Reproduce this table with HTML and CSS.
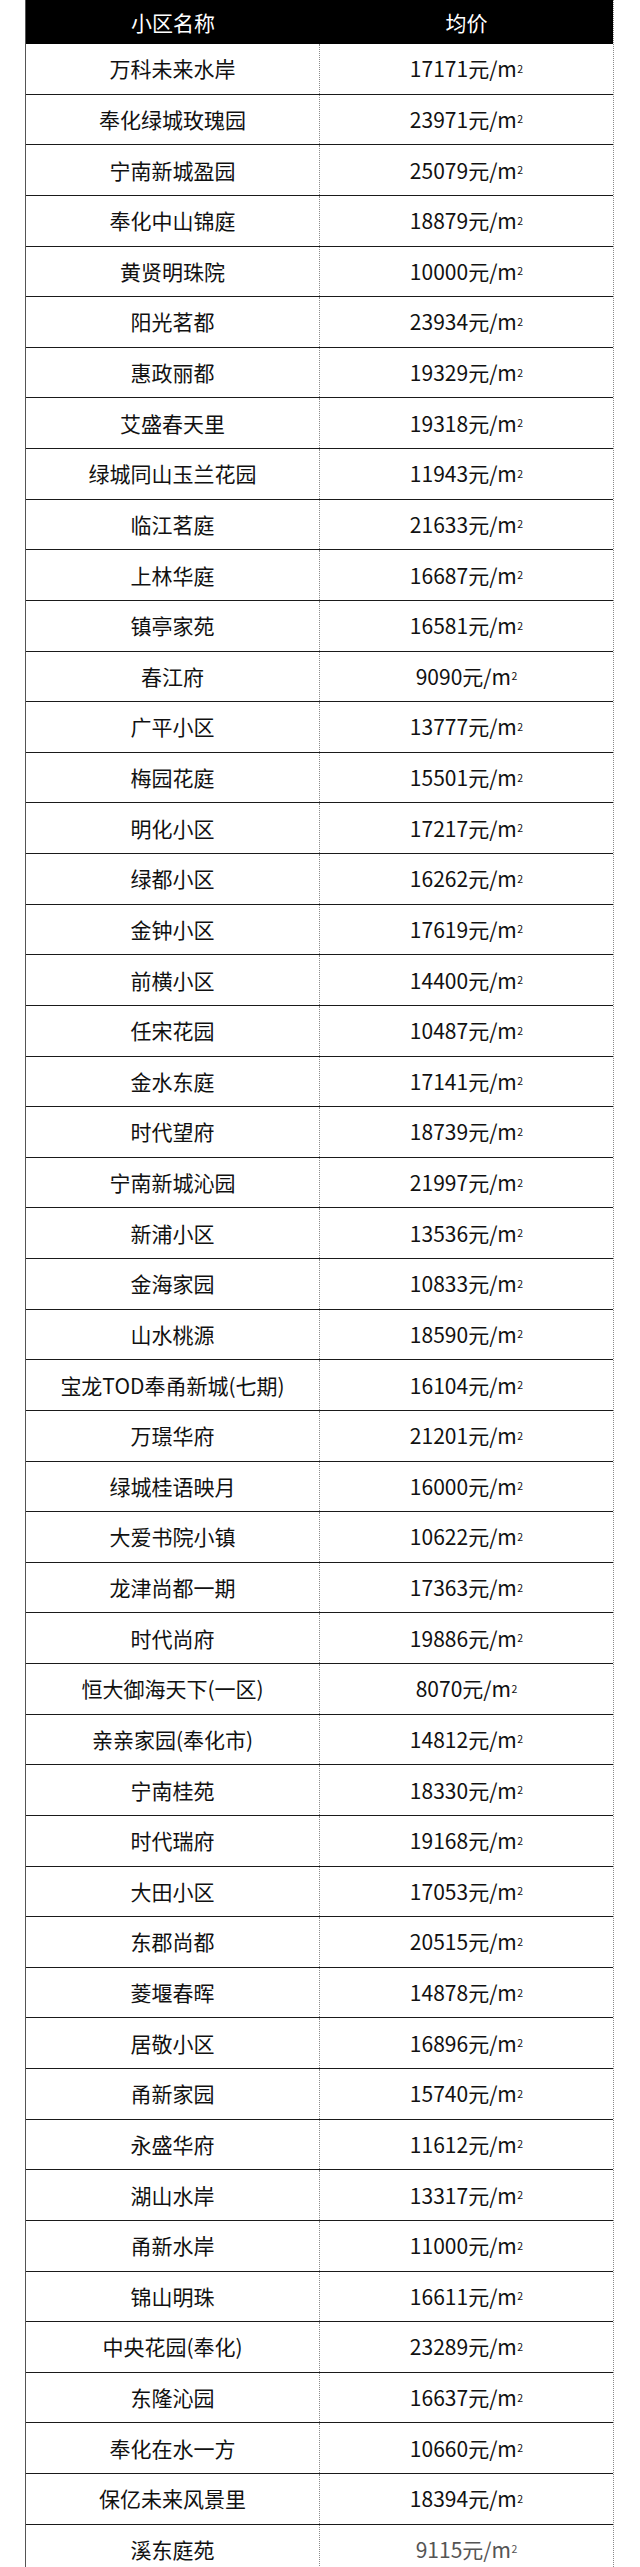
FILE: index.html
```html
<!DOCTYPE html>
<html lang="zh-CN">
<head>
<meta charset="utf-8">
<title>小区均价</title>
<link rel="stylesheet" href="styles.css">
</head>
<body>
<div class="sheet">
  <div class="row head"><div class="cell">小区名称</div><div class="cell">均价</div></div>
  <div class="row"><div class="cell">万科未来水岸</div><div class="cell">17171元/m<sup>2</sup></div></div>
  <div class="row"><div class="cell">奉化绿城玫瑰园</div><div class="cell">23971元/m<sup>2</sup></div></div>
  <div class="row"><div class="cell">宁南新城盈园</div><div class="cell">25079元/m<sup>2</sup></div></div>
  <div class="row"><div class="cell">奉化中山锦庭</div><div class="cell">18879元/m<sup>2</sup></div></div>
  <div class="row"><div class="cell">黄贤明珠院</div><div class="cell">10000元/m<sup>2</sup></div></div>
  <div class="row"><div class="cell">阳光茗都</div><div class="cell">23934元/m<sup>2</sup></div></div>
  <div class="row"><div class="cell">惠政丽都</div><div class="cell">19329元/m<sup>2</sup></div></div>
  <div class="row"><div class="cell">艾盛春天里</div><div class="cell">19318元/m<sup>2</sup></div></div>
  <div class="row"><div class="cell">绿城同山玉兰花园</div><div class="cell">11943元/m<sup>2</sup></div></div>
  <div class="row"><div class="cell">临江茗庭</div><div class="cell">21633元/m<sup>2</sup></div></div>
  <div class="row"><div class="cell">上林华庭</div><div class="cell">16687元/m<sup>2</sup></div></div>
  <div class="row"><div class="cell">镇亭家苑</div><div class="cell">16581元/m<sup>2</sup></div></div>
  <div class="row"><div class="cell">春江府</div><div class="cell">9090元/m<sup>2</sup></div></div>
  <div class="row"><div class="cell">广平小区</div><div class="cell">13777元/m<sup>2</sup></div></div>
  <div class="row"><div class="cell">梅园花庭</div><div class="cell">15501元/m<sup>2</sup></div></div>
  <div class="row"><div class="cell">明化小区</div><div class="cell">17217元/m<sup>2</sup></div></div>
  <div class="row"><div class="cell">绿都小区</div><div class="cell">16262元/m<sup>2</sup></div></div>
  <div class="row"><div class="cell">金钟小区</div><div class="cell">17619元/m<sup>2</sup></div></div>
  <div class="row"><div class="cell">前横小区</div><div class="cell">14400元/m<sup>2</sup></div></div>
  <div class="row"><div class="cell">任宋花园</div><div class="cell">10487元/m<sup>2</sup></div></div>
  <div class="row"><div class="cell">金水东庭</div><div class="cell">17141元/m<sup>2</sup></div></div>
  <div class="row"><div class="cell">时代望府</div><div class="cell">18739元/m<sup>2</sup></div></div>
  <div class="row"><div class="cell">宁南新城沁园</div><div class="cell">21997元/m<sup>2</sup></div></div>
  <div class="row"><div class="cell">新浦小区</div><div class="cell">13536元/m<sup>2</sup></div></div>
  <div class="row"><div class="cell">金海家园</div><div class="cell">10833元/m<sup>2</sup></div></div>
  <div class="row"><div class="cell">山水桃源</div><div class="cell">18590元/m<sup>2</sup></div></div>
  <div class="row"><div class="cell">宝龙TOD奉甬新城(七期)</div><div class="cell">16104元/m<sup>2</sup></div></div>
  <div class="row"><div class="cell">万璟华府</div><div class="cell">21201元/m<sup>2</sup></div></div>
  <div class="row"><div class="cell">绿城桂语映月</div><div class="cell">16000元/m<sup>2</sup></div></div>
  <div class="row"><div class="cell">大爱书院小镇</div><div class="cell">10622元/m<sup>2</sup></div></div>
  <div class="row"><div class="cell">龙津尚都一期</div><div class="cell">17363元/m<sup>2</sup></div></div>
  <div class="row"><div class="cell">时代尚府</div><div class="cell">19886元/m<sup>2</sup></div></div>
  <div class="row"><div class="cell">恒大御海天下(一区)</div><div class="cell">8070元/m<sup>2</sup></div></div>
  <div class="row"><div class="cell">亲亲家园(奉化市)</div><div class="cell">14812元/m<sup>2</sup></div></div>
  <div class="row"><div class="cell">宁南桂苑</div><div class="cell">18330元/m<sup>2</sup></div></div>
  <div class="row"><div class="cell">时代瑞府</div><div class="cell">19168元/m<sup>2</sup></div></div>
  <div class="row"><div class="cell">大田小区</div><div class="cell">17053元/m<sup>2</sup></div></div>
  <div class="row"><div class="cell">东郡尚都</div><div class="cell">20515元/m<sup>2</sup></div></div>
  <div class="row"><div class="cell">菱堰春晖</div><div class="cell">14878元/m<sup>2</sup></div></div>
  <div class="row"><div class="cell">居敬小区</div><div class="cell">16896元/m<sup>2</sup></div></div>
  <div class="row"><div class="cell">甬新家园</div><div class="cell">15740元/m<sup>2</sup></div></div>
  <div class="row"><div class="cell">永盛华府</div><div class="cell">11612元/m<sup>2</sup></div></div>
  <div class="row"><div class="cell">湖山水岸</div><div class="cell">13317元/m<sup>2</sup></div></div>
  <div class="row"><div class="cell">甬新水岸</div><div class="cell">11000元/m<sup>2</sup></div></div>
  <div class="row"><div class="cell">锦山明珠</div><div class="cell">16611元/m<sup>2</sup></div></div>
  <div class="row"><div class="cell">中央花园(奉化)</div><div class="cell">23289元/m<sup>2</sup></div></div>
  <div class="row"><div class="cell">东隆沁园</div><div class="cell">16637元/m<sup>2</sup></div></div>
  <div class="row"><div class="cell">奉化在水一方</div><div class="cell">10660元/m<sup>2</sup></div></div>
  <div class="row"><div class="cell">保亿未来风景里</div><div class="cell">18394元/m<sup>2</sup></div></div>
  <div class="row"><div class="cell">溪东庭苑</div><div class="cell faded">9115元/m<sup>2</sup></div></div>
</div>
</body>
</html>
```

FILE: styles.css
```css
html, body {
  margin: 0;
  padding: 0;
  background: #ffffff;
}

body {
  font-family: "Noto Sans CJK SC", "Noto Sans", "Liberation Sans", sans-serif;
  color: #111111;
  overflow: hidden;
}

.sheet {
  width: 589px;
  margin-left: 25px;
  box-sizing: border-box;
  border-left: 1px solid #555555;
  border-right: 1px dotted #8a8a8a;
}

.row {
  display: grid;
  grid-template-columns: 294px 1fr;
  height: 50.625px;
  box-sizing: border-box;
  border-bottom: 1.3px solid #1a1a1a;
}

.cell {
  display: flex;
  align-items: center;
  justify-content: center;
  font-size: 21px;
  font-weight: 400;
  line-height: 1;
  white-space: nowrap;
}

.row .cell:first-child {
  border-right: 1px dotted #8a8a8a;
}

.row.head {
  height: 44px;
  background: #000000;
  color: #ffffff;
  border-bottom: none;
}

.row.head .cell:first-child {
  border-right: none;
}

.cell sup {
  font-size: 0.5em;
  line-height: 0;
  vertical-align: 0.8em;
  margin-left: 0.5px;
}

.faded {
  color: #555555;
}
```
